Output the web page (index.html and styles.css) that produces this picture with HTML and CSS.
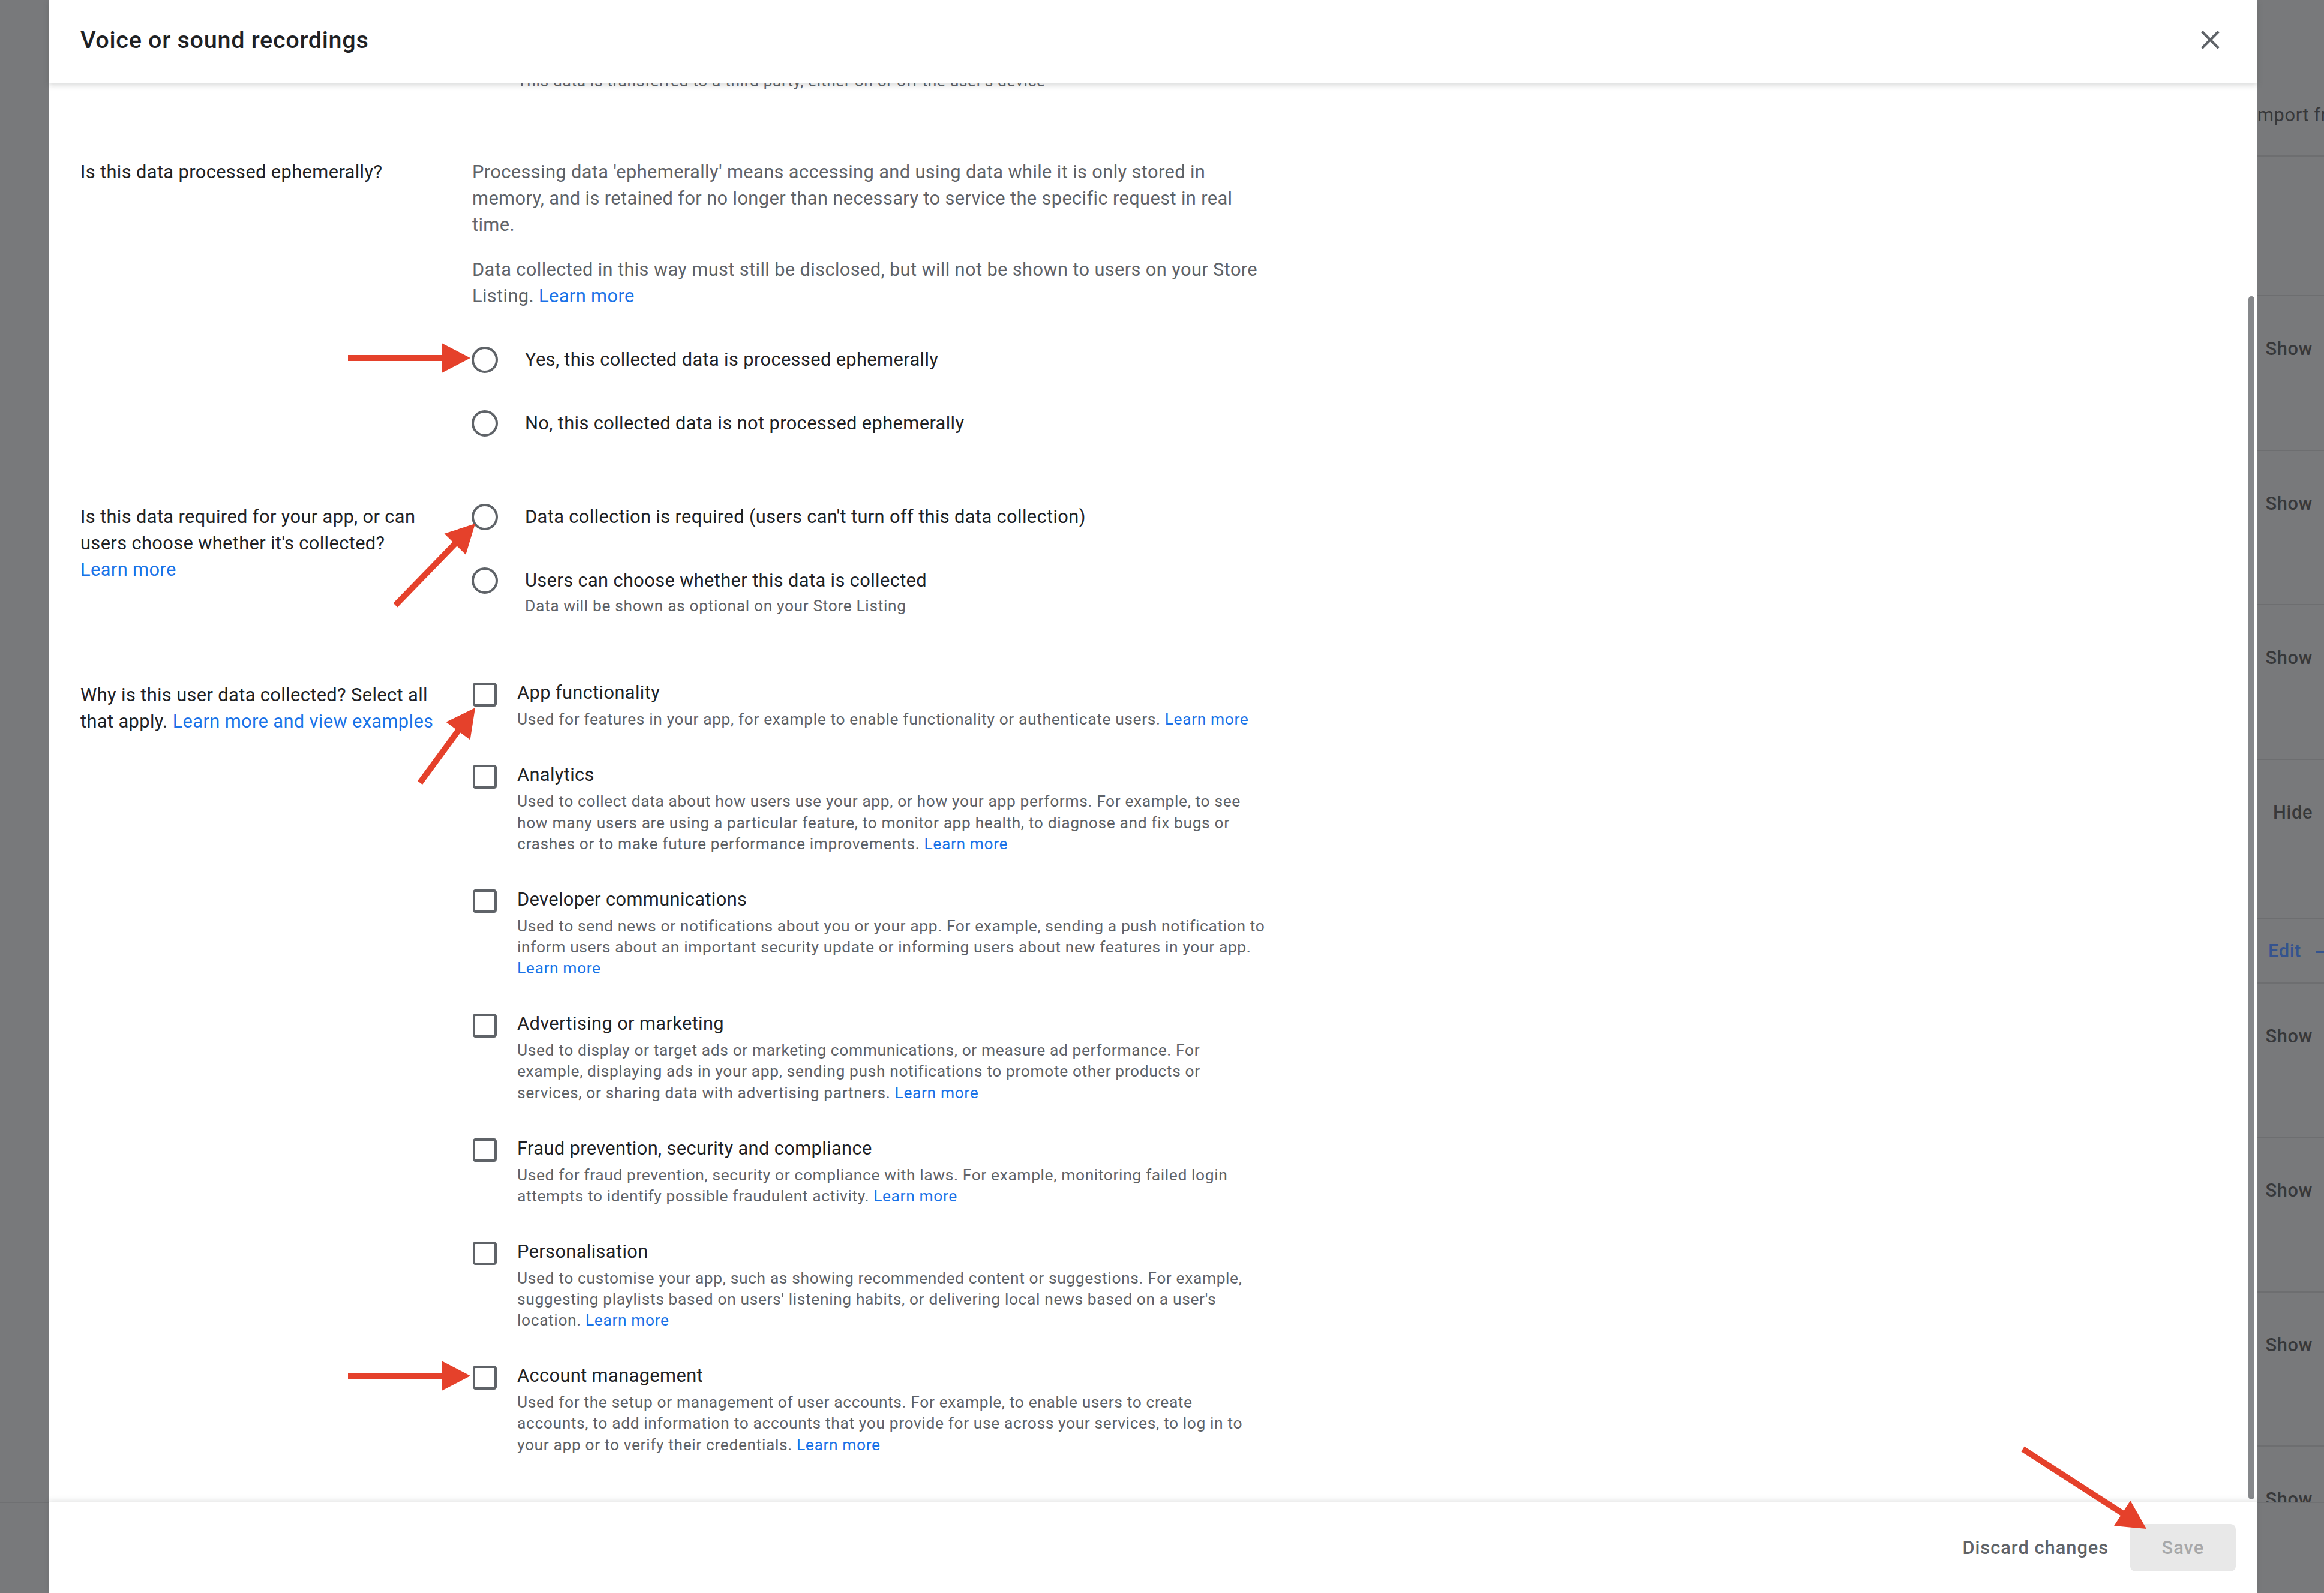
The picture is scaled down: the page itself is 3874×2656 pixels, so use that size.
FILE: index.html
```html
<!DOCTYPE html>
<html lang="en">
<head>
    <meta charset="UTF-8">
    <meta name="viewport" content="width=device-width, initial-scale=1.0">
    <title>Voice or sound recordings</title>
    <link rel="stylesheet" href="styles.css">
</head>
<body>
    <div class="screen">
        <div class="side side-left">
            <div class="side-bottom"></div>
        </div>

        <div class="dialog">
            <div class="dialog-head">
                <h2>Voice or sound recordings</h2>
                <button class="close" aria-label="Close">
                    <svg viewBox="0 0 24 24"><path d="M19 6.41L17.59 5 12 10.59 6.41 5 5 6.41 10.59 12 5 17.59 6.41 19 12 13.41 17.59 19 19 17.59 13.41 12z"/></svg>
                </button>
            </div>

            <div class="dialog-body">
                <!-- previous question, scrolled mostly out of view -->
                <div class="section cut">
                    <div class="label"></div>
                    <div class="field">
                        <p class="check-desc indent">This data is transferred to a third party, either on or off the user's device</p>
                    </div>
                </div>

                <div class="section eph">
                    <div class="label">Is this data processed ephemerally?</div>
                    <div class="field">
                        <p class="lead">Processing data 'ephemerally' means accessing and using data while it is only stored in memory, and is retained for no longer than necessary to service the specific request in real time.</p>
                        <p class="lead">Data collected in this way must still be disclosed, but will not be shown to users on your Store Listing. <a href="#">Learn more</a></p>
                        <div class="radios">
                            <label class="radio-row"><span class="radio"></span><span class="radio-text">Yes, this collected data is processed ephemerally</span></label>
                            <label class="radio-row"><span class="radio"></span><span class="radio-text">No, this collected data is not processed ephemerally</span></label>
                        </div>
                    </div>
                </div>

                <div class="section req">
                    <div class="label">Is this data required for your app, or can users choose whether it's collected? <a href="#">Learn more</a></div>
                    <div class="field">
                        <label class="radio-row"><span class="radio"></span><span class="radio-text">Data collection is required (users can't turn off this data collection)</span></label>
                        <label class="radio-row">
                            <span class="radio"></span>
                            <span>
                                <span class="radio-text">Users can choose whether this data is collected</span>
                                <span class="radio-hint">Data will be shown as optional on your Store Listing</span>
                            </span>
                        </label>
                    </div>
                </div>

                <div class="section why">
                    <div class="label">Why is this user data collected? Select all that apply. <a href="#">Learn more and view examples</a></div>
                    <div class="field checks">
                        <label class="check-row">
                            <span class="check"></span>
                            <span>
                                <span class="check-title">App functionality</span>
                                <span class="check-desc">Used for features in your app, for example to enable functionality or authenticate users. <a href="#">Learn more</a></span>
                            </span>
                        </label>
                        <label class="check-row">
                            <span class="check"></span>
                            <span>
                                <span class="check-title">Analytics</span>
                                <span class="check-desc">Used to collect data about how users use your app, or how your app performs. For example, to see how many users are using a particular feature, to monitor app health, to diagnose and fix bugs or crashes or to make future performance improvements. <a href="#">Learn more</a></span>
                            </span>
                        </label>
                        <label class="check-row">
                            <span class="check"></span>
                            <span>
                                <span class="check-title">Developer communications</span>
                                <span class="check-desc">Used to send news or notifications about you or your app. For example, sending a push notification to inform users about an important security update or informing users about new features in your app. <a href="#">Learn more</a></span>
                            </span>
                        </label>
                        <label class="check-row">
                            <span class="check"></span>
                            <span>
                                <span class="check-title">Advertising or marketing</span>
                                <span class="check-desc">Used to display or target ads or marketing communications, or measure ad performance. For example, displaying ads in your app, sending push notifications to promote other products or services, or sharing data with advertising partners. <a href="#">Learn more</a></span>
                            </span>
                        </label>
                        <label class="check-row">
                            <span class="check"></span>
                            <span>
                                <span class="check-title">Fraud prevention, security and compliance</span>
                                <span class="check-desc">Used for fraud prevention, security or compliance with laws. For example, monitoring failed login attempts to identify possible fraudulent activity. <a href="#">Learn more</a></span>
                            </span>
                        </label>
                        <label class="check-row">
                            <span class="check"></span>
                            <span>
                                <span class="check-title">Personalisation</span>
                                <span class="check-desc">Used to customise your app, such as showing recommended content or suggestions. For example, suggesting playlists based on users' listening habits, or delivering local news based on a user's location. <a href="#">Learn more</a></span>
                            </span>
                        </label>
                        <label class="check-row">
                            <span class="check"></span>
                            <span>
                                <span class="check-title">Account management</span>
                                <span class="check-desc">Used for the setup or management of user accounts. For example, to enable users to create accounts, to add information to accounts that you provide for use across your services, to log in to your app or to verify their credentials. <a href="#">Learn more</a></span>
                            </span>
                        </label>
                    </div>
                </div>

                <div class="thumb"></div>
            </div>

            <div class="dialog-foot">
                <button class="btn-text">Discard changes</button>
                <button class="btn-save" disabled>Save</button>
            </div>
        </div>

        <div class="side side-right">
            <div class="rows">
                <div class="import">Import from</div>
                <div class="row head"></div>
                <div class="row">Show</div>
                <div class="row">Show</div>
                <div class="row">Show</div>
                <div class="row tall">Hide</div>
                <div class="row edit">Edit<span class="dash"></span></div>
                <div class="row">Show</div>
                <div class="row">Show</div>
                <div class="row">Show</div>
                <div class="row">Show</div>
            </div>
            <div class="side-bottom"></div>
        </div>
    </div>

    <!-- annotation arrows drawn over the screenshot -->
    <svg class="marks" width="3874" height="2656" viewBox="0 0 3874 2656">
        <g stroke="#e5412b" stroke-width="10" fill="none">
            <line x1="580" y1="597" x2="740" y2="597"/>
            <line x1="580" y1="2294" x2="740" y2="2294"/>
            <line x1="659" y1="1009" x2="761" y2="904"/>
            <line x1="700" y1="1305" x2="766" y2="1215"/>
            <line x1="3372" y1="2416" x2="3541" y2="2525"/>
        </g>
        <g fill="#e5412b">
            <polygon points="736,572 784,597 736,622"/>
            <polygon points="736,2269 784,2294 736,2319"/>
            <polygon points="740.5,889.8 792,873 776.3,924.8"/>
            <polygon points="743.4,1203.8 792,1180 783.6,1233.4"/>
            <polygon points="3524.1,2544 3578,2549 3551.3,2502"/>
        </g>
    </svg>
</body>
</html>
```

FILE: styles.css
```css
* {
    margin: 0;
    padding: 0;
    box-sizing: border-box;
}
body {
    position: relative;
    width: 3874px;
    height: 2656px;
    overflow: hidden;
    background: #78797b;
    font-family: Roboto, "Liberation Sans", sans-serif;
}
a {
    color: #1a73e8;
    text-decoration: none;
    white-space: nowrap;
}
button {
    font-family: inherit;
    border: 0;
    background: none;
}

.screen {
    display: flex;
    width: 3874px;
    height: 2656px;
}

/* page behind the scrim */
.side {
    display: flex;
    flex-direction: column;
}
.side-left {
    width: 81px;
    justify-content: flex-end;
}
.side-right {
    flex: 1;
    overflow: hidden;
}
.side-bottom {
    height: 152px;
    border-top: 2px solid #6f7072;
}
.rows {
    flex: 1;
    overflow: hidden;
    color: #37383a;
    font-size: 30.8px;
    font-weight: 500;
    line-height: 44px;
    letter-spacing: 0.6px;
    white-space: nowrap;
}
.import {
    height: 261px;
    padding-top: 170px;
    margin-left: -9px;
    font-weight: 400;
    border-bottom: 2px solid #6d6e70;
}
.row {
    height: 257.5px;
    padding: 66px 19px 0 0;
    text-align: right;
    border-bottom: 2px solid #6d6e70;
}
.row.head {
    height: 233px;
}
.row.tall {
    height: 265px;
}
.row.edit {
    height: 108px;
    padding: 32px 0 0 18px;
    text-align: left;
    color: #34538f;
}
.dash {
    display: inline-block;
    width: 30px;
    height: 3px;
    margin-left: 25px;
    vertical-align: middle;
    background: #34538f;
}

/* dialog */
.dialog {
    width: 3682px;
    display: flex;
    flex-direction: column;
    background: #fff;
}
.dialog-head {
    position: relative;
    z-index: 2;
    height: 139px;
    padding: 0 52px 6px 53px;
    display: flex;
    align-items: center;
    justify-content: space-between;
    background: #fff;
    box-shadow: 0 3px 9px rgba(60, 64, 67, 0.2);
}
.dialog-head h2 {
    font-size: 39.6px;
    font-weight: 500;
    line-height: 52px;
    letter-spacing: 0.7px;
    color: #202124;
}
.close {
    width: 52.8px;
    height: 52.8px;
}
.close svg {
    display: block;
    width: 52.8px;
    height: 52.8px;
    fill: #5f6368;
}

.dialog-body {
    position: relative;
    height: 2365px;
    overflow: hidden;
    padding: 0 53px;
}
.section {
    display: grid;
    grid-template-columns: 612px 1323px;
    column-gap: 41px;
}
.section.cut {
    margin-top: -21px;
}
.section.eph {
    margin-top: 111.4px;
}
.section.req {
    margin-top: 50.4px;
}
.section.req .label {
    padding-top: 30.8px;
}
.section.why {
    margin-top: 52.8px;
}
.section.why .label {
    padding-top: 26px;
}
.label {
    font-size: 30.8px;
    line-height: 44px;
    letter-spacing: 0.38px;
    color: #202124;
}
.lead {
    font-size: 30.8px;
    line-height: 44px;
    letter-spacing: 0.38px;
    color: #5f6368;
}
.lead + .lead {
    margin-top: 31px;
}
.radios {
    margin-top: 32px;
}
.radio-row {
    display: flex;
    padding: 30.8px 0;
}
.radio {
    flex: none;
    width: 44px;
    height: 44px;
    margin: 0 45px 0 -1px;
    border: 4.4px solid #5f6368;
    border-radius: 50%;
}
.radio-text {
    display: block;
    font-size: 30.8px;
    line-height: 44px;
    letter-spacing: 0.38px;
    color: #202124;
}
.radio-hint {
    display: block;
    margin-top: 3px;
    font-size: 26.4px;
    line-height: 35.2px;
    letter-spacing: 0.62px;
    color: #5f6368;
}

.checks {
    display: flex;
    flex-direction: column;
    gap: 52.8px;
    padding-top: 22px;
}
.check-row {
    display: flex;
}
.check {
    flex: none;
    width: 39.6px;
    height: 39.6px;
    margin: 5px 34.4px 0 1px;
    border: 4.4px solid #5f6368;
    border-radius: 4.4px;
}
.check-title {
    display: block;
    font-size: 30.8px;
    line-height: 44px;
    letter-spacing: 0.38px;
    color: #202124;
}
.check-desc {
    display: block;
    margin-top: 5px;
    font-size: 26.4px;
    line-height: 35.2px;
    letter-spacing: 0.62px;
    color: #5f6368;
}
.check-desc.indent {
    margin-top: 0;
    padding-left: 75px;
}

.thumb {
    position: absolute;
    top: 355px;
    right: 5px;
    width: 10px;
    height: 2006px;
    border-radius: 5px;
    background: #86888b;
}

.dialog-foot {
    position: relative;
    z-index: 2;
    flex: 1;
    display: flex;
    justify-content: flex-end;
    align-items: flex-start;
    gap: 18px;
    padding: 36px 36px 0 0;
    background: #fff;
    border-top: 1px solid #e3e3e3;
    box-shadow: 0 -3px 8px rgba(60, 64, 67, 0.12);
}
.btn-text,
.btn-save {
    height: 79.2px;
    font-size: 30.8px;
    font-weight: 500;
    letter-spacing: 1px;
    border-radius: 8.8px;
}
.btn-text {
    padding: 0 17.6px;
    color: #5f6368;
}
.btn-save {
    padding: 0 52.8px;
    color: #a7a8aa;
    background: #e8e8e8;
}

.marks {
    position: absolute;
    z-index: 10;
    top: 0;
    left: 0;
    pointer-events: none;
}
```
